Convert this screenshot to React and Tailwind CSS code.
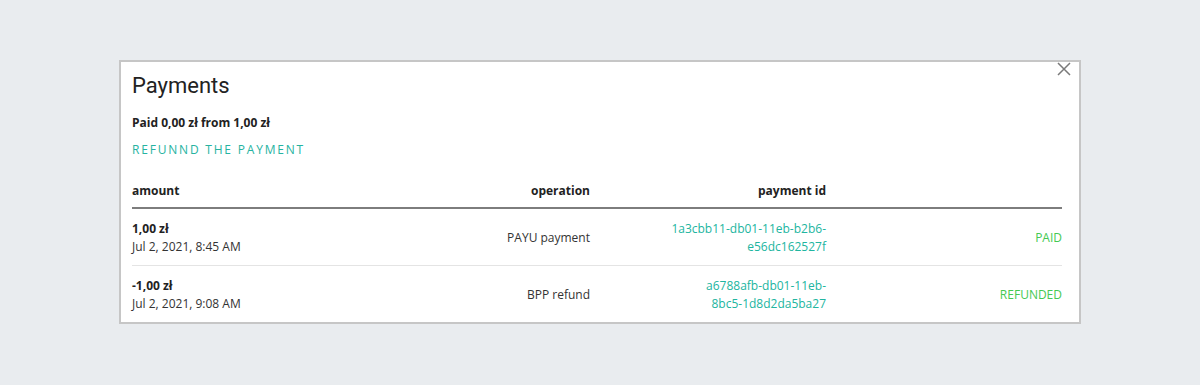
import React from 'react';

const payments = [
    { amount: '1,00 zł', date: 'Jul 2, 2021, 8:45 AM', operation: 'PAYU payment', id: ['1a3cbb11-db01-11eb-b2b6-', 'e56dc162527f'], status: 'PAID' },
    { amount: '-1,00 zł', date: 'Jul 2, 2021, 9:08 AM', operation: 'BPP refund', id: ['a6788afb-db01-11eb-', '8bc5-1d8d2da5ba27'], status: 'REFUNDED' }
];

export default function App() {
    return (
        <div className="min-h-[385px] bg-[#e9ecef] pt-[60px]" style={{ fontFamily: '"Open Sans", sans-serif' }}>
            <div className="relative mx-auto w-[962px] bg-white border-2 border-[#c6c6c6] pl-[11px] pr-[17px] text-[#222]">
                {/* close */}
                <button className="absolute right-[7px] top-[-1px] w-[16px] h-[16px] flex items-center justify-center">
                    <svg width="14" height="14" viewBox="0 0 14 14" fill="none">
                        <path d="M1 1 L13 13 M13 1 L1 13" stroke="#7a7a7a" strokeWidth="1.5" />
                    </svg>
                </button>

                <h2 className="pt-[11px] text-[22px] leading-[26px] text-[#222]" style={{ fontFamily: 'Roboto, sans-serif' }}>Payments</h2>
                <p className="mt-[16px] text-[12px] leading-[16px] font-bold">Paid 0,00 zł from 1,00 zł</p>
                <button className="block mt-[11px] text-[12px] leading-[16px] tracking-[0.15em] text-[#26b3a1] uppercase">Refunnd the payment</button>

                <div className="mt-[25px]">
                    <div className="grid grid-cols-[1fr_236px_236px_236px] text-[12px] leading-[16px] font-bold pb-[8px] border-b-2 border-[#7d7d7d]">
                        <span>amount</span>
                        <span className="text-right">operation</span>
                        <span className="text-right">payment id</span>
                        <span />
                    </div>
                    {payments.map((p, i) => (
                        <div key={i} className={`grid grid-cols-[1fr_236px_236px_236px] items-center pt-[11px] pb-[9px] text-[12px] leading-[18px] ${i < payments.length - 1 ? 'border-b border-[#e4e4e4]' : ''}`}>
                            <div className="flex flex-col">
                                <span className="font-bold">{p.amount}</span>
                                <span className="text-[#333]">{p.date}</span>
                            </div>
                            <span className="text-right text-[#333]">{p.operation}</span>
                            <div className="flex flex-col items-end text-[#21b5a0]">
                                <span>{p.id[0]}</span>
                                <span>{p.id[1]}</span>
                            </div>
                            <span className="text-right text-[#45c952]">{p.status}</span>
                        </div>
                    ))}
                </div>
            </div>
        </div>
    );
}
